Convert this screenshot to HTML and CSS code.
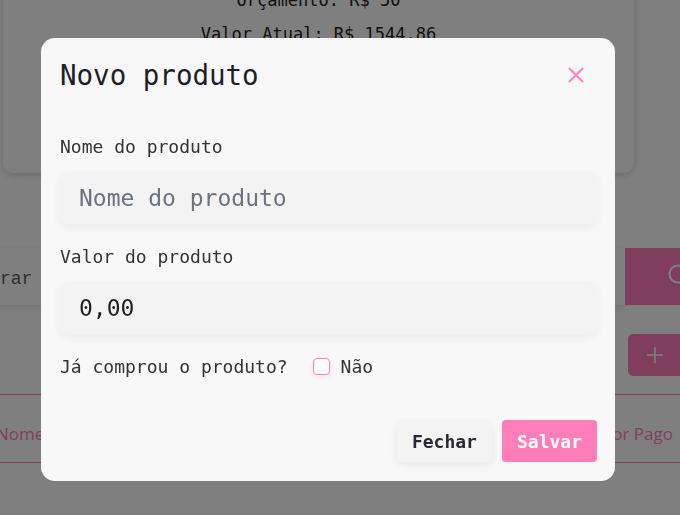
FILE: index.html
```html
<!DOCTYPE html>
<html lang="pt">
<head>
<meta charset="utf-8">
<title>Novo produto</title>
<link rel="stylesheet" href="styles.css">
</head>
<body>
<div class="page">
  <div class="card">
    <p class="card-line">Orçamento: R$ 50</p>
    <p class="card-line">Valor Atual: R$ 1544.86</p>
  </div>
  <div class="search">
    <div class="search-input">Procurar</div>
    <div class="search-btn">
      <svg class="search-icon" width="30" height="30" viewBox="0 0 30 30"><circle cx="19" cy="12" r="8.5" fill="none" stroke="#fff" stroke-width="2"/></svg>
    </div>
  </div>
  <div class="add-row">
    <div class="add-btn">
      <svg width="18" height="18" viewBox="0 0 18 18"><path d="M9 1v16M1 9h16" stroke="#fff" stroke-width="1.6" fill="none"/></svg>
    </div>
  </div>
  <div class="table-head">
    <span class="th">Nome</span>
    <span class="th">Valor Pago</span>
  </div>
</div>

<div class="overlay">
  <div class="dialog">
    <div class="dialog-header">
      <h2 class="dialog-title">Novo produto</h2>
      <button class="close-btn" aria-label="Fechar">
        <svg width="16" height="16" viewBox="0 0 16 16"><path d="M1 1L15 15M15 1L1 15" stroke="#ff84bf" stroke-width="2" fill="none"/></svg>
      </button>
    </div>
    <div class="dialog-body">
      <label class="field-label">Nome do produto</label>
      <div class="field-input placeholder">Nome do produto</div>
      <label class="field-label second">Valor do produto</label>
      <div class="field-input">0,00</div>
      <div class="check-row">
        <span class="check-label">Já comprou o produto?</span>
        <span class="checkbox"></span>
        <span class="check-text">Não</span>
      </div>
    </div>
    <div class="dialog-footer">
      <button class="btn btn-close">Fechar</button>
      <button class="btn btn-save">Salvar</button>
    </div>
  </div>
</div>
</body>
</html>
```

FILE: styles.css
```css
* { box-sizing: border-box; }
html, body {
  margin: 0;
  height: 515px;
  overflow: hidden;
  background: #fff;
  font-family: "DejaVu Sans Mono", monospace;
}
.page {
  display: flex;
  flex-direction: column;
  width: 680px;
}
.card {
  margin: -22px 46px 0 3px;
  padding: 12px 0 115px;
  background: #fff;
  border-radius: 10px;
  box-shadow: 0 2px 8px rgba(0,0,0,0.16);
  text-align: center;
}
.card-line {
  margin: 0 0 14px;
  font-size: 17px;
  line-height: 20px;
  color: #222;
}
.search {
  display: flex;
  margin: 75px -40px 0 -70px;
  height: 57px;
}
.search-input {
  flex: 1;
  padding: 4px 0 0 16px;
  display: flex;
  align-items: center;
  font-family: "Liberation Mono", monospace;
  font-size: 18px;
  color: #5e5e5e;
  background: #fff;
  box-shadow: 0 2px 6px rgba(0,0,0,0.12);
}
.search-btn {
  width: 95px;
  background: #ff7eb9;
  display: flex;
  align-items: center;
  padding-left: 34px;
}
.search-icon { display: block; }
.add-row {
  display: flex;
  justify-content: flex-end;
  margin: 29px -10px 0 0;
}
.add-btn {
  width: 62px;
  height: 42px;
  border-radius: 5px;
  background: #ff7eb9;
  display: flex;
  align-items: center;
  padding-left: 18px;
}
.add-btn svg { display: block; }
.table-head {
  margin: 18px 0 0 -4px;
  padding: 10px 7px 0 0;
  height: 69px;
  border-top: 1px solid #ff7eb9;
  border-bottom: 1px solid #ff7eb9;
  display: flex;
  justify-content: space-between;
  align-items: center;
  font-family: "Open Sans", sans-serif;
  font-size: 17px;
  color: #ff7eb9;
}

.overlay {
  position: fixed;
  inset: 0;
  background: rgba(0,0,0,0.5);
  display: flex;
  align-items: flex-start;
  padding: 38px 0 0 41px;
}
.dialog {
  width: 574px;
  height: 443px;
  background: #f8f8f8;
  border-radius: 14px;
  padding: 20px 18px 19px 19px;
  display: flex;
  flex-direction: column;
}
.dialog-header {
  display: flex;
  align-items: center;
  justify-content: space-between;
  height: 34px;
}
.dialog-title {
  margin: 0;
  font-size: 27.5px;
  font-weight: normal;
  line-height: 34px;
  color: #1e1e2a;
}
.close-btn {
  border: 0;
  background: none;
  padding: 0;
  margin-right: 13px;
  width: 16px;
  height: 16px;
  display: flex;
}
.dialog-body {
  display: flex;
  flex-direction: column;
  padding-top: 44px;
}
.field-label {
  font-size: 18px;
  line-height: 22px;
  color: #333;
}
.field-label.second { margin-top: 22px; }
.field-input {
  margin-top: 14px;
  height: 52px;
  border-radius: 6px;
  background: #f3f3f3;
  box-shadow: 0 3px 8px rgba(0,0,0,0.06);
  padding-left: 19px;
  display: flex;
  align-items: center;
  font-size: 23px;
  color: #222;
}
.field-input.placeholder { color: #6b7280; }
.check-row {
  margin-top: 21px;
  display: flex;
  align-items: center;
  height: 22px;
  font-size: 18px;
  color: #333;
}
.checkbox {
  width: 17px;
  height: 17px;
  margin: 0 11px 0 25px;
  border: 1.5px solid #ff7eb9;
  border-radius: 4px;
  background: #fff;
  box-shadow: 0 2px 6px rgba(0,0,0,0.08);
}
.dialog-footer {
  margin-top: auto;
  display: flex;
  justify-content: flex-end;
  gap: 10px;
}
.btn {
  height: 42px;
  padding: 0 15px;
  border: 0;
  border-radius: 4px;
  font-family: "DejaVu Sans Mono", monospace;
  font-size: 18px;
  font-weight: bold;
}
.btn-close {
  background: #f3f3f3;
  color: #2a2a35;
  box-shadow: 0 3px 8px rgba(0,0,0,0.07);
}
.btn-save {
  background: #ff7eb9;
  color: #fff;
}
```
